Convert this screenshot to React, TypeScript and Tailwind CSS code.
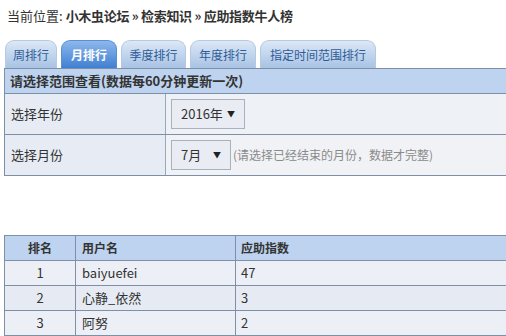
const tabs = [
  { label: '周排行', w: 'w-[52px]' },
  { label: '月排行', w: 'w-[56px]', active: true },
  { label: '季度排行', w: 'w-[65px]' },
  { label: '年度排行', w: 'w-[66px]' },
  { label: '指定时间范围排行', w: 'w-[116px]' },
]

const rows = [
  { rank: 1, name: 'baiyuefei', score: 47 },
  { rank: 2, name: '心静_依然', score: 3 },
  { rank: 3, name: '阿努', score: 2 },
]

function Select({ value, w }: { value: string; w: string }) {
  return (
    <div className={`${w} h-[30px] flex items-center justify-between pl-[9px] pr-[9px] border border-[#a9b1bd] bg-[#e9edf3] text-[13px] text-[#333]`}>
      <span>{value}</span>
      <span className="text-[8px] text-[#222]">▼</span>
    </div>
  )
}

export default function App() {
  return (
    <div
      className="w-[506px] h-[336px] overflow-hidden bg-white text-[12px] text-[#333]"
      style={{ fontFamily: '"Noto Sans CJK SC", "Noto Sans", sans-serif' }}
    >
      {/* Breadcrumb */}
      <div className="h-[31px] pl-[7px] flex items-center leading-none text-[13px]">
        <span>当前位置:</span>
        <span className="font-bold ml-[3px] tracking-[-0.3px]">小木虫论坛 » 检索知识 » 应助指数牛人榜</span>
      </div>

      {/* Tabs */}
      <div className="flex gap-[4px] pl-[5px] mt-[9px] h-[28px]">
        {tabs.map((t) => (
          <div
            key={t.label}
            className={`${t.w} h-[28px] rounded-t-[9px] flex items-center justify-center border border-b-0 ${
              t.active
                ? 'bg-gradient-to-b from-[#8db8ec] to-[#3f7fd2] border-[#5b8fd0] text-white font-bold'
                : 'bg-gradient-to-b from-[#dbe8f6] to-[#a8c3e4] border-[#b5c9e2] text-[#2f5c99]'
            }`}
          >
            {t.label}
          </div>
        ))}
      </div>

      {/* Filter panel */}
      <div className="ml-[4px] w-[520px] border-t border-l border-[#7f8fa6]">
        <div className="h-[25px] bg-[#bed3ef] border-b border-[#7f8fa6] pl-[5px] flex items-center font-bold text-[13px]">
          请选择范围查看(数据每60分钟更新一次)
        </div>
        <div className="flex h-[41px] border-b border-[#7f8fa6] bg-[#eef1f6]">
          <div className="w-[161px] border-r border-[#9aa8bb] pl-[6px] flex items-center bg-[#e7ecf4] text-[13px]">选择年份</div>
          <div className="flex items-center pl-[5px]">
            <Select value="2016年" w="w-[74px]" />
          </div>
        </div>
        <div className="flex h-[41px] border-b border-[#7f8fa6] bg-[#f1f2f6]">
          <div className="w-[161px] border-r border-[#9aa8bb] pl-[6px] flex items-center bg-[#e7ecf4] text-[13px]">选择月份</div>
          <div className="flex items-center pl-[5px]">
            <Select value="7月" w="w-[60px]" />
            <span className="ml-[2px] text-[#8a8a8a]">(请选择已经结束的月份，数据才完整)</span>
          </div>
        </div>
      </div>

      {/* Ranking table */}
      <div className="ml-[4px] mt-[59px] w-[520px] border-t border-l border-[#7f8fa6]">
        <div className="flex h-[25px] bg-[#bed3ef] border-b border-[#7f8fa6] font-bold">
          <div className="w-[71px] border-r border-[#7f8fa6] flex items-center justify-center">排名</div>
          <div className="w-[160px] border-r border-[#7f8fa6] flex items-center pl-[6px]">用户名</div>
          <div className="flex-1 flex items-center pl-[5px]">应助指数</div>
        </div>
        {rows.map((r, i) => (
          <div
            key={r.rank}
            className={`flex h-[25px] border-b border-[#7f8fa6] text-[13px] ${i % 2 === 0 ? 'bg-[#eceff5]' : 'bg-[#e6ebf3]'}`}
          >
            <div className="w-[71px] border-r border-[#7f8fa6] flex items-center justify-center">{r.rank}</div>
            <div className="w-[160px] border-r border-[#7f8fa6] flex items-center pl-[6px]">{r.name}</div>
            <div className="flex-1 flex items-center pl-[5px]">{r.score}</div>
          </div>
        ))}
      </div>
    </div>
  )
}
